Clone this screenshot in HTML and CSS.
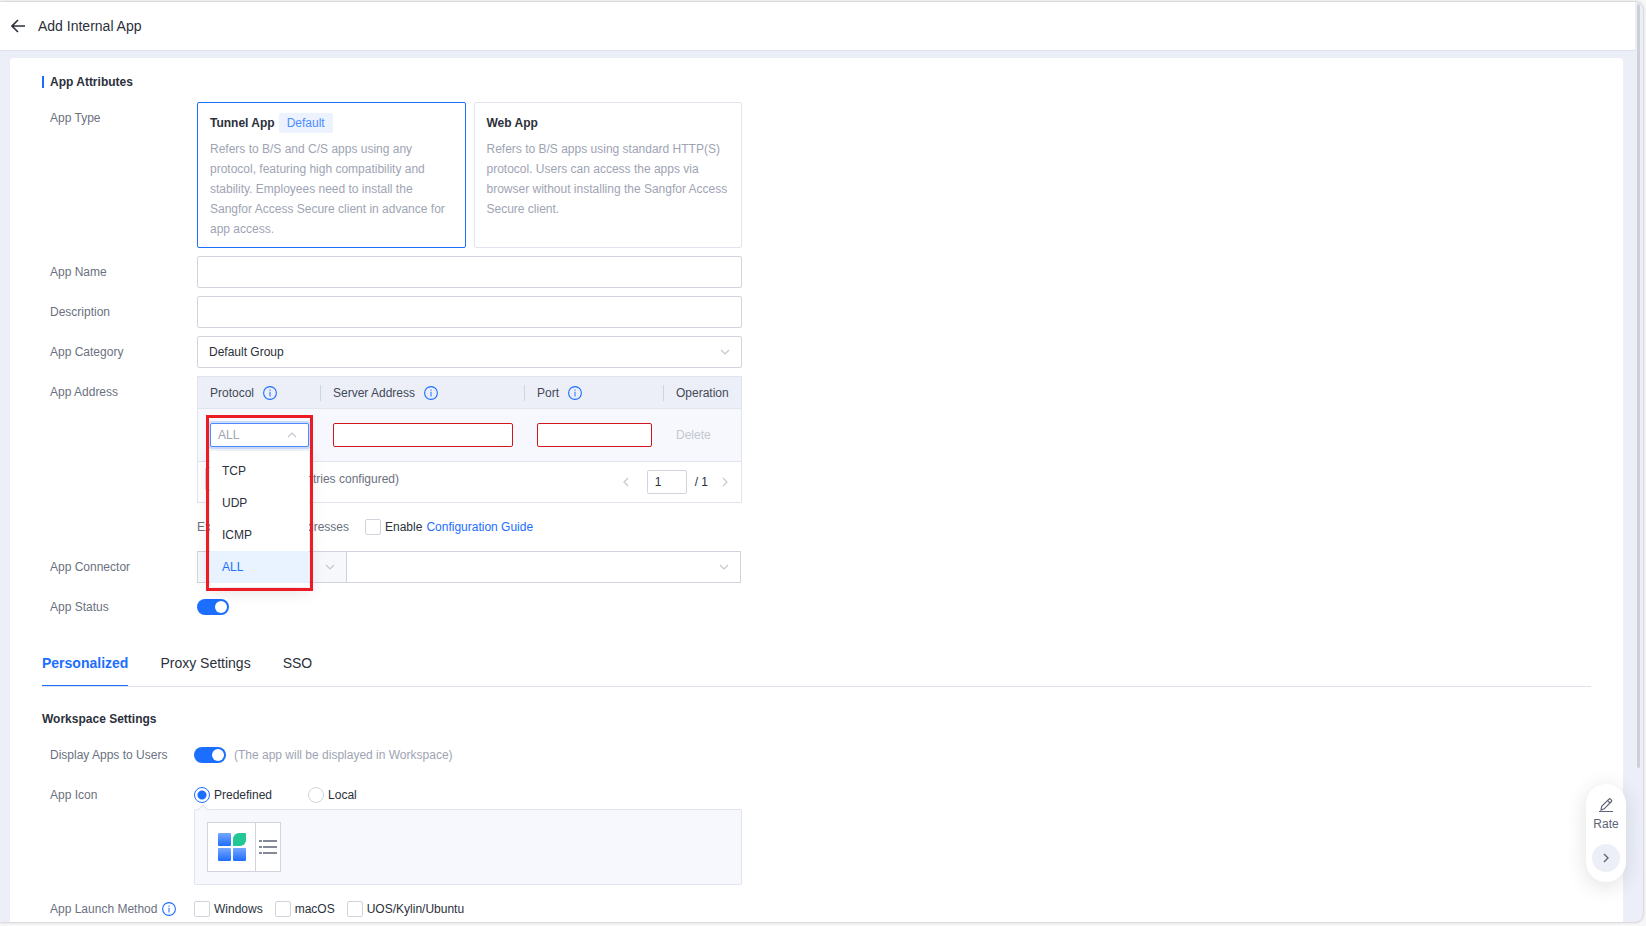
FILE: index.html
```html
<!DOCTYPE html>
<html lang="en">
<head>
  <meta charset="UTF-8" />
  <meta name="viewport" content="width=device-width, initial-scale=1.0"/>
  <title>Add Internal App</title>
  <link rel="stylesheet" href="styles.css">
</head>
<body>

<!-- Shared icons -->
<svg class="sprite" aria-hidden="true">
  <symbol id="icon-info" viewBox="0 0 14 14">
    <circle cx="7" cy="7" r="6.4" fill="none" stroke="#1c6eff" stroke-width="1.1"/>
    <path d="M7 5.8v4.6M7 3.4v1.3" fill="none" stroke="#5a94ff" stroke-width="1.4"/>
  </symbol>
  <symbol id="icon-down" viewBox="0 0 10 6">
    <path d="M1 1l4 4 4-4" fill="none" stroke="currentColor" stroke-width="1.2"/>
  </symbol>
  <symbol id="icon-up" viewBox="0 0 10 6">
    <path d="M1 5l4-4 4 4" fill="none" stroke="currentColor" stroke-width="1.2"/>
  </symbol>
</svg>

<div class="frame">
  <div class="scroll-area">
    <header class="page-header">
      <button class="back-btn" title="Back">
        <svg width="14" height="14" viewBox="0 0 14 14"><path d="M7 1L1 7l6 6M1 7h13" fill="none" stroke="#2b303b" stroke-width="1.6"/></svg>
      </button>
      <h1>Add Internal App</h1>
    </header>

    <main class="card">
      <h2 class="section-title">App Attributes</h2>

      <div class="form">
        <div class="row">
          <span class="label">App Type</span>
          <div class="field type-list">
            <button class="type-card active">
              <span class="type-head"><b>Tunnel App</b><span class="tag">Default</span></span>
              <span class="type-desc">Refers to B/S and C/S apps using any protocol, featuring high compatibility and stability. Employees need to install the Sangfor Access Secure client in advance for app access.</span>
            </button>
            <button class="type-card">
              <span class="type-head"><b>Web App</b></span>
              <span class="type-desc">Refers to B/S apps using standard HTTP(S) protocol. Users can access the apps via browser without installing the Sangfor Access Secure client.</span>
            </button>
          </div>
        </div>

        <div class="row">
          <label class="label" for="app-name">App Name</label>
          <div class="field"><input class="text-input" type="text" id="app-name"></div>
        </div>

        <div class="row">
          <label class="label" for="description">Description</label>
          <div class="field"><input class="text-input" type="text" id="description"></div>
        </div>

        <div class="row">
          <label class="label" for="category">App Category</label>
          <div class="field select-box">
            <select class="text-input" id="category"><option>Default Group</option></select>
            <svg class="arrow"><use href="#icon-down"/></svg>
          </div>
        </div>

        <div class="row">
          <span class="label">App Address</span>
          <div class="field address">
            <table>
              <thead>
                <tr>
                  <th class="col-protocol"><div>Protocol <svg class="info"><use href="#icon-info"/></svg></div></th>
                  <th class="col-server"><div>Server Address <svg class="info"><use href="#icon-info"/></svg></div></th>
                  <th class="col-port"><div>Port <svg class="info"><use href="#icon-info"/></svg></div></th>
                  <th><div>Operation</div></th>
                </tr>
              </thead>
              <tbody>
                <tr>
                  <td class="col-protocol">
                    <div class="select-box protocol-select">
                      <select class="text-input small" aria-label="Protocol"><option>ALL</option></select>
                      <svg class="arrow"><use href="#icon-up"/></svg>
                      <ul class="menu">
                        <li>TCP</li>
                        <li>UDP</li>
                        <li>ICMP</li>
                        <li class="selected">ALL</li>
                      </ul>
                      <div class="highlight"></div>
                    </div>
                  </td>
                  <td><input class="text-input small error" type="text" aria-label="Server Address"></td>
                  <td><input class="text-input small error port" type="text" aria-label="Port"></td>
                  <td><button class="delete-btn" disabled>Delete</button></td>
                </tr>
              </tbody>
            </table>
            <div class="table-footer">
              <div class="add-entry">
                <button class="add-btn">Add</button>
                <span>(Up to 50 entries configured)</span>
              </div>
              <div class="pager">
                <button title="Previous"><svg width="6" height="10" viewBox="0 0 6 10"><path d="M5 1L1 5l4 4" fill="none" stroke="currentColor" stroke-width="1.2"/></svg></button>
                <input class="text-input small" type="text" value="1" aria-label="Page">
                <span>/ 1</span>
                <button title="Next"><svg width="6" height="10" viewBox="0 0 6 10"><path d="M1 1l4 4-4 4" fill="none" stroke="currentColor" stroke-width="1.2"/></svg></button>
              </div>
            </div>
          </div>
        </div>

        <div class="row">
          <span class="label"></span>
          <div class="field excluded">
            <span class="excluded-text"><span>Excluded</span> <span>Server Addresses</span></span>
            <label class="check"><input type="checkbox"> Enable</label>
            <a href="#">Configuration Guide</a>
          </div>
        </div>

        <div class="row">
          <label class="label" for="connector">App Connector</label>
          <div class="field connector">
            <div class="select-box connector-type">
              <select class="text-input" aria-label="Connector type"><option></option></select>
              <svg class="arrow"><use href="#icon-down"/></svg>
            </div>
            <div class="select-box connector-name">
              <select class="text-input" id="connector"><option></option></select>
              <svg class="arrow"><use href="#icon-down"/></svg>
            </div>
          </div>
        </div>

        <div class="row">
          <label class="label" for="status">App Status</label>
          <div class="field line"><input class="switch" type="checkbox" id="status" checked></div>
        </div>
      </div>

      <nav class="tabs">
        <button class="tab active">Personalized</button>
        <button class="tab">Proxy Settings</button>
        <button class="tab">SSO</button>
      </nav>

      <h3 class="sub-title">Workspace Settings</h3>

      <div class="form workspace">
        <div class="row">
          <label class="label" for="display-apps">Display Apps to Users</label>
          <div class="field line">
            <input class="switch" type="checkbox" id="display-apps" checked>
            <span class="hint">(The app will be displayed in Workspace)</span>
          </div>
        </div>

        <div class="row">
          <span class="label">App Icon</span>
          <div class="field">
            <div class="radio-line">
              <label class="check"><input type="radio" name="icon" checked> Predefined</label>
              <label class="check"><input type="radio" name="icon"> Local</label>
            </div>
            <div class="icon-panel">
              <div class="icon-picker">
                <div class="icon-preview">
                  <svg width="28" height="28" viewBox="0 0 28 28">
                    <defs>
                      <linearGradient id="tile" x1="0" y1="0" x2="0" y2="1">
                        <stop offset="0" stop-color="#75a6ff"/>
                        <stop offset="1" stop-color="#1c6eff"/>
                      </linearGradient>
                    </defs>
                    <rect width="13" height="13" rx="1" fill="url(#tile)"/>
                    <path d="M15 13V6a6 6 0 0 1 6-6h6a1 1 0 0 1 1 1v6a6 6 0 0 1-6 6z" fill="#21c794"/>
                    <rect y="15" width="13" height="13" rx="1" fill="url(#tile)"/>
                    <rect x="15" y="15" width="13" height="13" rx="1" fill="url(#tile)"/>
                  </svg>
                </div>
                <button class="icon-list-btn" title="Choose icon">
                  <svg width="18" height="16" viewBox="0 0 18 16"><path d="M0 2h3M4 2h14M0 8h3M4 8h14M0 14h3M4 14h14" stroke="#5c6375" stroke-width="1.4"/></svg>
                </button>
              </div>
            </div>
          </div>
        </div>

        <div class="row">
          <span class="label launch-label">App Launch Method <svg class="info"><use href="#icon-info"/></svg></span>
          <div class="field line launch">
            <label class="check"><input type="checkbox"> Windows</label>
            <label class="check"><input type="checkbox"> macOS</label>
            <label class="check"><input type="checkbox"> UOS/Kylin/Ubuntu</label>
          </div>
        </div>
      </div>
    </main>
  </div>

  <div class="scrollbar"></div>

  <div class="rate-box">
    <button class="rate-btn">
      <svg width="16" height="16" viewBox="0 0 16 16" fill="none" stroke="#5c6375" stroke-width="1.2"><path d="M3 13l.7-3.6L11 2.1a1 1 0 0 1 1.4 0l1 1a1 1 0 0 1 0 1.4L6.200 11.800zM9.600 3.600l2.400 2.400M1 14.500h14"/></svg>
      Rate
    </button>
    <button class="rate-toggle" title="Collapse">
      <svg width="6" height="10" viewBox="0 0 6 10"><path d="M1 1l4 4-4 4" fill="none" stroke="#5c6375" stroke-width="1.4"/></svg>
    </button>
  </div>
</div>

</body>
</html>
```

FILE: styles.css
```css
* {
  box-sizing: border-box;
}

body {
  margin: 0;
  padding: 2px 3px 4px 0;
  background: #f7f7f7;
  font-family: "Liberation Sans", Arial, sans-serif;
  font-size: 12px;
  line-height: 20px;
  color: #2b303b;
}

button, input, select {
  font: inherit;
  color: inherit;
  margin: 0;
}

button {
  background: none;
  border: none;
  padding: 0;
  cursor: pointer;
}

h1, h2, h3 {
  margin: 0;
}

a {
  color: #1c6eff;
  text-decoration: none;
}

.sprite {
  display: none;
}

.frame {
  position: relative;
  height: calc(100vh - 6px);
  overflow: hidden;
  background: #eceff8;
  border-radius: 0 8px 8px 0;
  box-shadow: 0 0 3px rgba(0, 0, 0, 0.3);
}

.scroll-area {
  height: 100%;
  padding-right: 8px;
  overflow: hidden;
}

.page-header {
  display: flex;
  align-items: center;
  gap: 13px;
  height: 49px;
  padding-left: 11px;
  background: #fff;
  border-bottom: 1px solid #dfe2ea;
}

.page-header h1 {
  font-size: 14px;
  font-weight: normal;
}

.back-btn {
  display: flex;
}

.card {
  margin: 7px 12px 0 10px;
  padding: 14px 32px 16px;
  background: #fff;
  border-radius: 4px;
}

.section-title {
  display: flex;
  align-items: center;
  gap: 6px;
  margin-bottom: 10px;
  font-size: 12px;
}

.section-title::before {
  content: "";
  width: 2px;
  height: 12px;
  background: #1c6eff;
}

/* Form rows */
.form {
  display: flex;
  flex-direction: column;
  gap: 8px;
  max-width: 700px;
  padding-left: 8px;
}

.row {
  display: flex;
}

.label {
  flex: none;
  width: 147px;
  line-height: 32px;
  color: #6b7180;
}

.workspace .label {
  width: 144px;
}

.field {
  flex: 1;
  min-width: 0;
}

.line {
  display: flex;
  align-items: center;
  gap: 8px;
  height: 32px;
}

.text-input {
  display: block;
  width: 100%;
  height: 32px;
  padding: 0 11px;
  background: #fff;
  border: 1px solid #d0d4dd;
  border-radius: 2px;
  outline: none;
  appearance: none;
}

.text-input.small {
  height: 24px;
  padding: 0 7px;
}

.text-input.error {
  border-color: #cf171d;
}

.select-box {
  position: relative;
}

.arrow {
  position: absolute;
  top: calc(50% - 3px);
  right: 12px;
  width: 10px;
  height: 6px;
  color: #c3c7d1;
  pointer-events: none;
}

/* App type cards */
.type-list {
  display: flex;
  gap: 8px;
}

.type-card {
  display: flex;
  flex: 1;
  flex-direction: column;
  gap: 6px;
  padding: 10px 12px 8px;
  border: 1px solid #e1e4ec;
  border-radius: 2px;
  text-align: left;
}

.type-card.active {
  border-color: #1c6eff;
}

.type-head {
  display: flex;
  gap: 4px;
}

.tag {
  padding: 0 8px;
  background: #ecf3ff;
  border-radius: 2px;
  color: #4a8cff;
}

.type-desc {
  color: #9ea4b3;
}

/* Address table */
.address {
  border: 1px solid #e1e4ec;
}

table {
  width: 100%;
  border-spacing: 0;
  table-layout: fixed;
}

th, td {
  padding: 0 0 0 12px;
  border-bottom: 1px solid #e1e4ec;
  text-align: left;
}

th {
  height: 32px;
  background: #eceff8;
  font-weight: normal;
  color: #434957;
}

th div {
  display: flex;
  align-items: center;
  gap: 9px;
  height: 16px;
}

th:not(:last-child) div {
  border-right: 1px solid #d0d4dd;
}

td {
  height: 53px;
  padding-right: 12px;
  background: #f7f8fd;
}

td:last-child {
  padding-right: 0;
}

.col-protocol {
  width: 123px;
}

.col-server {
  width: 204px;
}

.col-port {
  width: 139px;
}

.info {
  flex: none;
  width: 14px;
  height: 14px;
}

.port {
  max-width: 115px;
}

.delete-btn {
  color: #c3c7d1;
}

.protocol-select select {
  border-color: #4a8cff;
  box-shadow: 0 0 0 2px rgba(28, 110, 255, 0.2);
  color: #9ea4b3;
}

.menu {
  position: absolute;
  top: 28px;
  left: 0;
  z-index: 10;
  width: 100%;
  margin: 0;
  padding: 4px 0;
  background: #fff;
  border-radius: 2px;
  box-shadow: 0 4px 16px rgba(43, 48, 59, 0.15);
  list-style: none;
}

.menu li {
  padding: 0 12px;
  line-height: 32px;
}

.menu .selected {
  background: #e8f3ff;
  color: #1c6eff;
}

.highlight {
  position: absolute;
  top: -8px;
  left: -4px;
  z-index: 11;
  width: 107px;
  height: 176px;
  border: 3px solid #ed1c24;
  pointer-events: none;
}

.table-footer {
  display: flex;
  align-items: flex-start;
  justify-content: space-between;
  height: 40px;
  padding: 5px 13px 0 7px;
}

.add-entry {
  display: flex;
  align-items: center;
  justify-content: space-between;
  width: 194px;
  color: #6b7180;
}

.add-btn {
  height: 24px;
  padding: 0 5px;
  border: 1px solid #d0d4dd;
  border-radius: 2px;
}

.pager {
  display: flex;
  align-items: center;
  gap: 8px;
  padding-top: 3px;
}

.pager button {
  display: flex;
  color: #c3c7d1;
}

.pager button:first-child {
  margin-right: 10px;
}

.pager button:last-child {
  margin-left: 6px;
}

.pager .text-input {
  width: 40px;
}

.excluded {
  display: flex;
  align-items: center;
  height: 32px;
}

.excluded-text {
  display: flex;
  justify-content: space-between;
  width: 152px;
  margin-right: 16px;
  color: #6b7180;
}

.excluded a {
  margin-left: 4px;
}

.connector {
  display: flex;
  padding-right: 1px;
}

.connector .text-input {
  border-radius: 0;
}

.connector-type {
  width: 150px;
}

.connector-type .text-input {
  background: #f7f8fc;
}

.connector-name {
  flex: 1;
  margin-left: -1px;
}

/* Check boxes, radios and switches */
.check {
  display: flex;
  align-items: center;
  gap: 4px;
}

.check input {
  width: 16px;
  height: 16px;
  background: #fff;
  border: 1px solid #d0d4dd;
  border-radius: 2px;
  appearance: none;
}

.check input[type="radio"] {
  border-radius: 50%;
}

.check input[type="radio"]:checked {
  border-color: #1c6eff;
  background: radial-gradient(circle, #1c6eff 4px, #fff 5px);
}

.switch {
  width: 32px;
  height: 16px;
  padding: 2px;
  background: #1c6eff;
  border-radius: 8px;
  appearance: none;
}

.switch::before {
  content: "";
  display: block;
  width: 12px;
  height: 12px;
  margin-left: auto;
  background: #fff;
  border-radius: 50%;
}

.hint {
  color: #9ea4b3;
}

/* Tabs */
.tabs {
  display: flex;
  gap: 32px;
  margin-top: 16px;
  border-bottom: 1px solid #dfe2ea;
}

.tab {
  height: 47px;
  padding-top: 2px;
  border-bottom: 1px solid transparent;
  font-size: 14px;
}

.tab.active {
  border-color: #1c6eff;
  color: #1c6eff;
  font-weight: bold;
}

.sub-title {
  margin: 22px 0 10px;
  font-size: 12px;
}

/* App icon */
.radio-line {
  display: flex;
  align-items: center;
  gap: 36px;
  height: 30px;
  padding-top: 2px;
}

.icon-panel {
  position: relative;
  padding: 12px;
  background: #f7f8fd;
  border: 1px solid #e1e4ec;
  border-radius: 2px;
}

.icon-panel::before {
  content: "";
  position: absolute;
  top: -4px;
  left: 4px;
  width: 7px;
  height: 7px;
  background: #f7f8fd;
  border: solid #e1e4ec;
  border-width: 1px 0 0 1px;
  transform: rotate(45deg);
}

.icon-picker {
  display: flex;
  width: 74px;
  height: 50px;
  background: #fff;
  border: 1px solid #d0d4dd;
}

.icon-preview, .icon-list-btn {
  display: flex;
  flex: 1;
  align-items: center;
  justify-content: center;
}

.icon-preview {
  flex: none;
  width: 48px;
  border-right: 1px solid #d0d4dd;
}

.launch-label {
  display: flex;
  align-items: center;
  gap: 5px;
}

.launch {
  gap: 12px;
}

.scrollbar {
  position: absolute;
  top: 2px;
  right: 3px;
  width: 3px;
  height: 83%;
  background: #cdd0d6;
  border-radius: 2px;
}

/* Floating rate box */
.rate-box {
  position: absolute;
  right: 17px;
  bottom: 40px;
  display: flex;
  flex-direction: column;
  align-items: center;
  gap: 10px;
  width: 40px;
  padding: 13px 0 10px;
  background: #fff;
  border-radius: 20px;
  box-shadow: 0 4px 20px rgba(43, 48, 59, 0.15);
}

.rate-btn {
  display: flex;
  flex-direction: column;
  align-items: center;
  gap: 1px;
  color: #5c6375;
}

.rate-toggle {
  display: flex;
  align-items: center;
  justify-content: center;
  width: 28px;
  height: 28px;
  background: #eceff8;
  border-radius: 50%;
}
```
